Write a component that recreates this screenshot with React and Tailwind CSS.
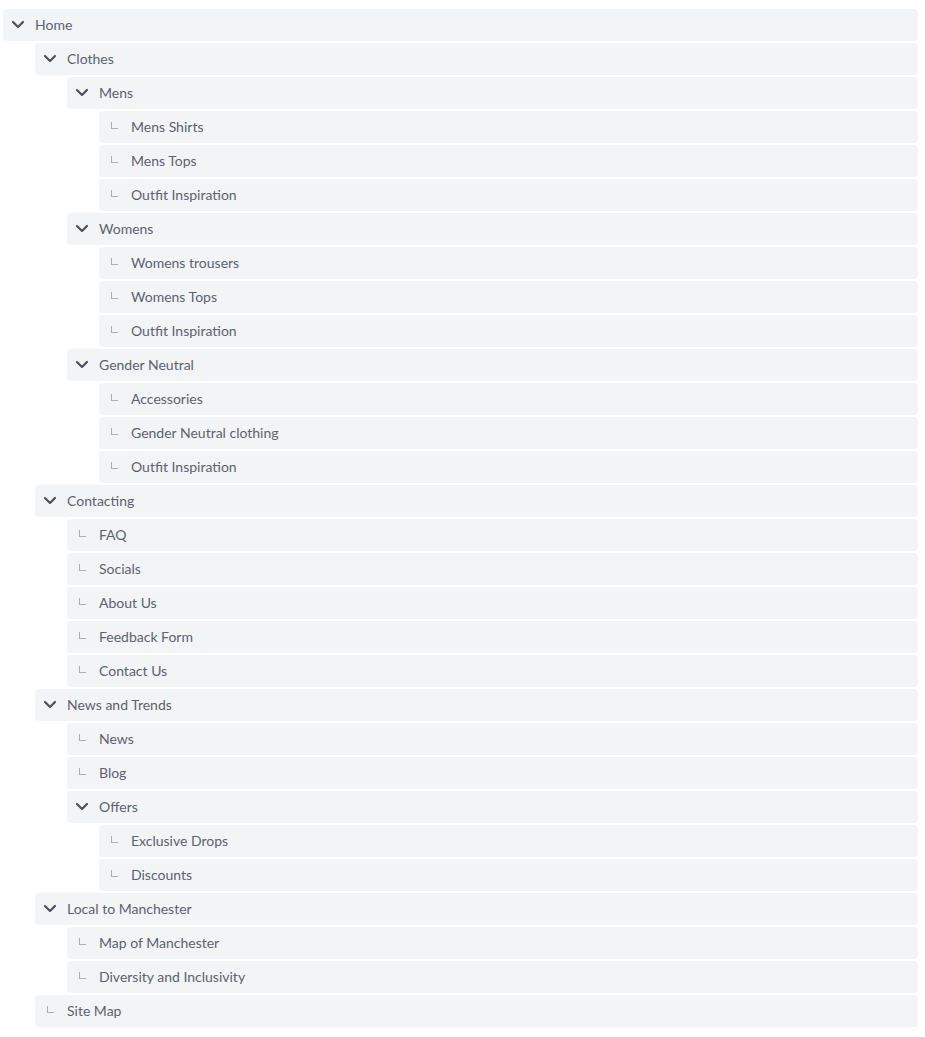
import React from 'react';

const tree = [
    {
        label: 'Home',
        children: [
            {
                label: 'Clothes',
                children: [
                    { label: 'Mens', children: [{ label: 'Mens Shirts' }, { label: 'Mens Tops' }, { label: 'Outfit Inspiration' }] },
                    { label: 'Womens', children: [{ label: 'Womens trousers' }, { label: 'Womens Tops' }, { label: 'Outfit Inspiration' }] },
                    { label: 'Gender Neutral', children: [{ label: 'Accessories' }, { label: 'Gender Neutral clothing' }, { label: 'Outfit Inspiration' }] },
                ],
            },
            {
                label: 'Contacting',
                children: [{ label: 'FAQ' }, { label: 'Socials' }, { label: 'About Us' }, { label: 'Feedback Form' }, { label: 'Contact Us' }],
            },
            {
                label: 'News and Trends',
                children: [
                    { label: 'News' },
                    { label: 'Blog' },
                    { label: 'Offers', children: [{ label: 'Exclusive Drops' }, { label: 'Discounts' }] },
                ],
            },
            {
                label: 'Local to Manchester',
                children: [{ label: 'Map of Manchester' }, { label: 'Diversity and Inclusivity' }],
            },
            { label: 'Site Map' },
        ],
    },
];

const Chevron = () => (
    <svg width="14" height="14" viewBox="0 0 14 14" className="text-[#4b5160] -mt-[2px]">
        <polyline points="2,5 7,10 12,5" fill="none" stroke="currentColor" strokeWidth="2.2" strokeLinecap="round" strokeLinejoin="round" />
    </svg>
);

const Leaf = () => (
    <div className="w-[14px] h-[14px] flex items-center pl-[4px]">
        <div className="w-[7px] h-[7px] border-l border-b border-[#a8adb7] -mt-[3px]" />
    </div>
);

const Node = ({ node }) => {
    const hasChildren = node.children && node.children.length > 0;
    return (
        <div className="flex flex-col gap-[2px]">
            <div className="h-8 flex items-center gap-[10px] pl-[8px] bg-[#f3f4f6] rounded-[4px]">
                {hasChildren ? <Chevron /> : <Leaf />}
                <span className="text-[14px] text-[#5b6370] pb-[2px]">{node.label}</span>
            </div>
            {hasChildren && (
                <div className="flex flex-col gap-[2px] pl-8">
                    {node.children.map((child, i) => (
                        <Node key={i} node={child} />
                    ))}
                </div>
            )}
        </div>
    );
};

export default function App() {
    return (
        <div className="bg-white min-h-screen pt-[9px] pl-[3px] pr-[7px] pb-[10px]" style={{ fontFamily: 'Lato, "Open Sans", sans-serif' }}>
            {tree.map((node, i) => (
                <Node key={i} node={node} />
            ))}
        </div>
    );
}
